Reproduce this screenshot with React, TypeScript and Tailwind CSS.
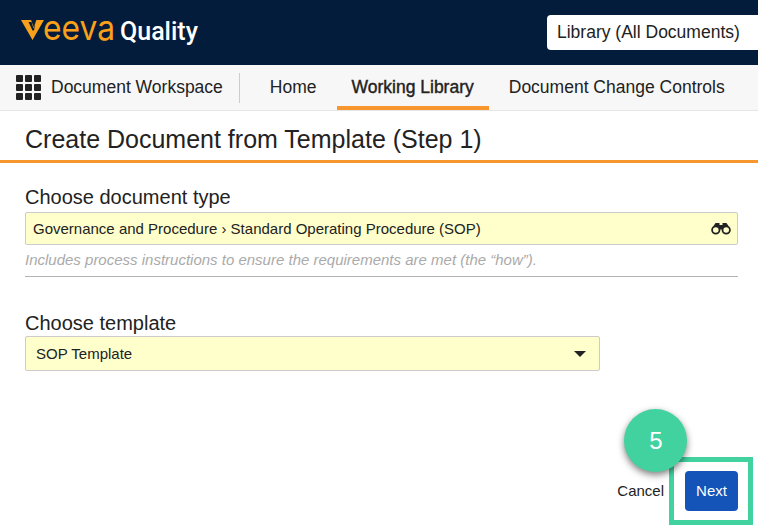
import React from "react";

const font = "[font-family:'Liberation_Sans',Arial,sans-serif]";

function Grid() {
  return (
    <div className="grid grid-cols-3 gap-[2px] w-[25px] h-[25px] shrink-0">
      {Array.from({ length: 9 }).map((_, i) => (
        <div key={i} className="bg-[#222222] rounded-[1px]" />
      ))}
    </div>
  );
}

function Binoculars() {
  return (
    <svg width="20" height="13" viewBox="0 0 20 13" className="shrink-0">
      <circle cx="4.8" cy="8" r="3.7" fill="none" stroke="#222" strokeWidth="1.8" />
      <circle cx="15.2" cy="8" r="3.7" fill="none" stroke="#222" strokeWidth="1.8" />
      <path d="M2.5 4 L4.5 1 H8.5 V3 H11.5 V1 H15.5 L17.5 4 L13 4.5 L11 7.5 H9 L7 4.5 Z" fill="#222" />
    </svg>
  );
}

function Logo() {
  return (
    <svg width="108" height="50" viewBox="0 0 108 50" className="shrink-0">
      <g transform="translate(0 13)">
        <path d="M0 1 H10 L12.7 8 L15.4 1 H23 L11.5 21 Z" fill="#f9a01b" />
        <path d="M7.5 3 H10.5 L12.5 9.5 L14.5 3 L13 11.5 H11.5 Z" fill="#041c3c" />
        <text x="22" y="21" textLength="72" lengthAdjust="spacingAndGlyphs" fontFamily="Inter, sans-serif" fontSize="35" fontWeight="400" fill="#f9a01b">eeva</text>
      </g>
    </svg>
  );
}

export default function App() {
  return (
    <div className={`relative w-[758px] h-[529px] overflow-hidden bg-white text-[#222222] ${font}`}>
      <header className="h-[65px] bg-[#041c3c] flex items-center justify-between pl-[21px]">
        <div className="flex items-center h-[32px] mb-[3px]">
          <Logo />
          <span className="text-white text-[25px] leading-none font-medium [font-family:'Roboto',sans-serif] -ml-[9px]">Quality</span>
        </div>
        <div className="w-[211px] h-[35px] bg-white rounded-l-[4px] flex items-center pl-[10px] text-[17.5px] mb-[1px]">
          Library (All Documents)
        </div>
      </header>

      <nav className="h-[46px] bg-[#f7f7f7] border-b border-[#e6e6e6] flex items-stretch">
        <div className="flex items-center pl-[16px]">
          <Grid />
          <span className="ml-[10px] text-[17.5px]">Document Workspace</span>
          <div className="w-px h-[30px] bg-[#cccccc] ml-[16px]" />
        </div>
        <div className="flex items-center pl-[30px] pr-[20px] text-[17.5px]">Home</div>
        <div className="flex items-center px-[15px] text-[17.5px] [-webkit-text-stroke:0.4px_#222222] border-b-[4px] border-[#f7962c] pt-[4px] h-[45px]">
          Working Library
        </div>
        <div className="flex items-center pl-[20px] text-[17.5px]">Document Change Controls</div>
      </nav>

      <div className="h-[52px] border-b-[3px] border-[#f7962c] flex items-center pl-[25px] pt-[8px] text-[25px]">
        Create Document from Template (Step 1)
      </div>

      <main className="px-[25px] pr-[20px]">
        <h2 className="text-[20px] leading-[24px] mt-[22px]">Choose document type</h2>
        <div className="h-[33px] mt-[3px] bg-[#ffffcc] border border-[#cccccc] rounded-[2px] flex items-center justify-between pl-[7px] pr-[6px] text-[15px]">
          <span className="pt-px">Governance and Procedure › Standard Operating Procedure (SOP)</span>
          <Binoculars />
        </div>
        <p className="text-[15px] italic text-[#aaaaaa] leading-[20px] mt-[5px] pb-[6px] border-b border-[#b3b3b3]">
          Includes process instructions to ensure the requirements are met (the “how”).
        </p>

        <h2 className="text-[20px] leading-[24px] mt-[34px]">Choose template</h2>
        <div className="w-[575px] h-[35px] mt-px bg-[#ffffcc] border border-[#cccccc] rounded-[2px] flex items-center justify-between pl-[10px] pr-[13px] text-[15px]">
          <span className="pt-px">SOP Template</span>
          <div className="w-0 h-0 border-x-[6px] border-x-transparent border-t-[6px] border-t-[#222222]" />
        </div>

        <div className="flex justify-end items-center mt-[100px]">
          <span className="text-[15px] mr-[21px]">Cancel</span>
          <div className="w-[53px] h-[40px] bg-[#1453b8] rounded-[4px] text-white text-[15px] flex items-center justify-center">
            Next
          </div>
        </div>
      </main>

      <div className="absolute left-[669px] top-[457px] w-[84px] h-[68px] border-[5px] border-[#41d2a0]" />
      <div className="absolute left-[624px] top-[409px] w-[63px] h-[63px] rounded-full bg-[#41d2a0] shadow-[0_3px_7px_rgba(0,0,0,0.5)] flex items-center justify-center text-white text-[24px] pl-px pt-px">
        5
      </div>
    </div>
  );
}
